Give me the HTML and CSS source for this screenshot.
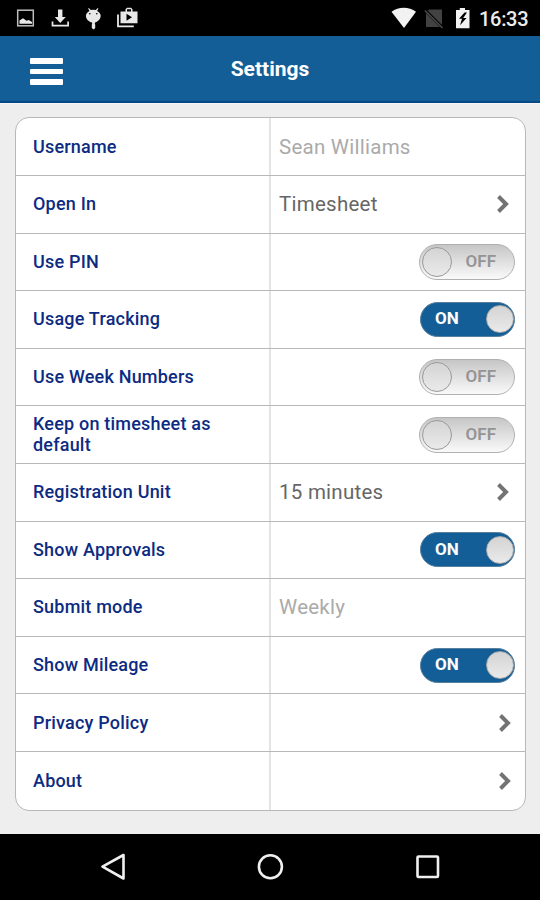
FILE: index.html
```
<!DOCTYPE html>
<html lang="en">
<head>
<meta charset="utf-8">
<title>Settings</title>
<link rel="stylesheet" href="styles.css">
</head>
<body>
<div class="status">
  <svg class="status-left" width="150" height="36" viewBox="0 0 150 36" fill="#e8e8e8">
    <rect x="17.700" y="10.200" width="15.600" height="15.600" fill="none" stroke="#bdbdbd" stroke-width="1.500"/>
    <path d="M19.500 23.700v-3.200l3.500-2.300 3.500 2.500 2.300-.8 3.200 2v1.800z"/>
    <path d="M58 9.500h4.400v7.500h3.400L60.200 23 54.800 17H58z"/>
    <path d="M52.500 21.500v4.200h15.600v-4.200" fill="none" stroke="#e8e8e8" stroke-width="1.700"/>
    <path d="M88.800 8l2 2.100q2.500-.8 5 0L97.800 8l.6.600-1.300 2.300c2.300 1.300 3.600 2.800 3.600 4.800 0 3-2.500 6-5.800 6.900v1.600h.3v3.800l-1.700 1.400-1.700-1.400v-3.800h.3v-1.600c-3.800-.9-6.200-3.900-6.200-6.900 0-2 1.300-3.500 3.600-4.800l-1.300-2.300z"/>
    <circle cx="89.800" cy="13.800" r=".8" fill="#000"/><circle cx="96.800" cy="13.800" r=".8" fill="#000"/>
    <path d="M118 14.500v11.900h15.800" fill="none" stroke="#e8e8e8" stroke-width="1.800"/>
    <path fill-rule="evenodd" d="M120.500 11.500h5V9.200l1.500-1.500h4l1.500 1.500v2.300h5v11.800h-17zM127 11.500h4V9.300h-4zM126.500 13.800v7l5.500-3.500z"/>
  </svg>
  <svg class="status-right" width="90" height="36" viewBox="388 0 90 36" fill="#f2f2f2">
    <path d="M391.500 11.700C398.500 6.400 409 6.400 416 11.700L404 28z"/>
    <path d="M429 9.500h13v17.500h-16V12.500z" fill="#424242"/>
    <path d="M424.500 9.500L443 28" stroke="#000" stroke-width="3"/><path d="M425 10.500l17.500 17.500" stroke="#4a4a4a" stroke-width="1.600"/>
    <path d="M456 10h3.800V8h5.200v2h4.500v18.300H456z"/>
    <path d="M464.500 12.500l-5.500 6.300h3l-2 6.500 6.600-7.300h-3.400l3.800-5.500z" fill="#000"/>
  </svg>
  <span class="clock">16:33</span>
</div>
<header class="header">
  <div class="burger"><i></i><i></i><i></i></div>
  <h1>Settings</h1>
</header>
<main class="page">
  <div class="card">
    <div class="row"><div class="label">Username</div><div class="value muted">Sean Williams</div></div>
    <div class="row"><div class="label">Open In</div><div class="value">Timesheet<svg class="chev" viewBox="0 0 14 20"><path d="M2.500 2.500L10 10l-7.500 7.500"/></svg></div></div>
    <div class="row"><div class="label">Use PIN</div><div class="value"><div class="toggle"><b></b><span>OFF</span></div></div></div>
    <div class="row"><div class="label">Usage Tracking</div><div class="value"><div class="toggle on"><span>ON</span><b></b></div></div></div>
    <div class="row"><div class="label">Use Week Numbers</div><div class="value"><div class="toggle"><b></b><span>OFF</span></div></div></div>
    <div class="row"><div class="label">Keep on timesheet as<br>default</div><div class="value"><div class="toggle"><b></b><span>OFF</span></div></div></div>
    <div class="row"><div class="label">Registration Unit</div><div class="value">15 minutes<svg class="chev" viewBox="0 0 14 20"><path d="M2.500 2.500L10 10l-7.500 7.500"/></svg></div></div>
    <div class="row"><div class="label">Show Approvals</div><div class="value"><div class="toggle on"><span>ON</span><b></b></div></div></div>
    <div class="row"><div class="label">Submit mode</div><div class="value muted">Weekly</div></div>
    <div class="row"><div class="label">Show Mileage</div><div class="value"><div class="toggle on"><span>ON</span><b></b></div></div></div>
    <div class="row"><div class="label">Privacy Policy</div><div class="value"><svg class="chev end" viewBox="0 0 14 20"><path d="M2.500 2.500L10 10l-7.500 7.500"/></svg></div></div>
    <div class="row"><div class="label">About</div><div class="value"><svg class="chev end" viewBox="0 0 14 20"><path d="M2.500 2.500L10 10l-7.500 7.500"/></svg></div></div>
  </div>
</main>
<nav class="navbar">
  <svg width="540" height="66" viewBox="0 834 540 66" fill="none" stroke="#f0f0f0" stroke-width="2.600" stroke-linejoin="round">
    <path d="M123.500 855v23.500L102.500 866.700z"/>
    <circle cx="270.400" cy="866.800" r="11.500"/>
    <rect x="417.500" y="856.500" width="20.500" height="20.500" rx="1"/>
  </svg>
</nav>
</body>
</html>
```

FILE: styles.css
```
* { box-sizing: border-box; }
body {
  margin: 0;
  width: 540px;
  height: 900px;
  overflow: hidden;
  display: flex;
  flex-direction: column;
  background: #eee;
  font-family: Roboto, "Liberation Sans", sans-serif;
}
.status {
  height: 36px;
  flex: none;
  background: #000;
  display: flex;
  align-items: center;
}
.status-right { margin-left: auto; }
.clock {
  width: 62px;
  color: #ececec;
  font-size: 20px;
  font-weight: 500;
  letter-spacing: -.3px;
  line-height: 36px;
  padding: 2px 0 0 1px;
}
.header {
  height: 67px;
  flex: none;
  background: #135e96;
  border-bottom: 2px solid #034b87;
  display: grid;
  grid-template-columns: 92px 1fr 92px;
}
.burger {
  padding: 22px 0 0 29.500px;
  display: flex;
  flex-direction: column;
  gap: 5px;
}
.burger i {
  width: 33px;
  height: 5.600px;
  border-radius: 1px;
  background: #fff;
}
.header h1 {
  margin: 0;
  color: #fff;
  font-size: 21px;
  font-weight: 700;
  line-height: 67px;
  text-align: center;
}
.page { flex: 1; padding: 13.400px 14px 0 15px; border-top: 1px solid #f8f4f7; }
.card {
  height: 693.200px;
  border: 1.500px solid #b8b8b8;
  border-radius: 14px;
  background: #fff;
  overflow: hidden;
  display: grid;
  grid-template-rows: repeat(12, 1fr);
}
.row {
  display: grid;
  grid-template-columns: 253px 1fr;
  min-height: 0;
  border-bottom: 1.500px solid #b8b8b8;
}
.row:last-child { border-bottom: 0; }
.label {
  padding-left: 17px;
  align-self: center;
  color: #0d2b82;
  font-size: 18px;
  font-weight: 500;
  line-height: 21px;
  letter-spacing: .2px;
  margin-top: -1px;
}
.value {
  border-left: 2px solid #e4e4e4;
  padding: 0 10px 0 8px;
  display: flex;
  align-items: center;
  color: #666;
  font-size: 20.500px;
  letter-spacing: .25px;
}
.muted { color: #aaa; }
.chev {
  width: 14px;
  height: 20px;
  margin-left: auto;
  margin-right: 5px;
  fill: none;
  stroke: #737373;
  stroke-width: 4;
}
.chev.end { margin-right: 3px; }
.toggle {
  width: 96px;
  height: 36px;
  margin-left: auto;
  padding: 0 18px 0 2px;
  border: 1.500px solid #b0b0b0;
  border-radius: 18px;
  background: linear-gradient(#c6c6c6, #fafafa);
  display: flex;
  align-items: center;
  justify-content: space-between;
  color: #949494;
  font-size: 17px;
  font-weight: 600;
  letter-spacing: 0;
}
.toggle b {
  width: 30px;
  height: 30px;
  border: 1.500px solid #999;
  border-radius: 50%;
  background: linear-gradient(#d4d4d4, #eaeaea);
}
.toggle.on {
  width: 95px;
  height: 35px;
  padding: 0 0 0 14px;
  background: #135e96;
  border-color: #57809f;
  color: #fff;
  font-weight: 700;
}
.toggle span { position: relative; top: -1px; }
.toggle.on b { width: 28px; height: 28px; border-color: #aaa; }
.navbar { height: 66px; flex: none; background: #000; }
.navbar svg { display: block; }
```
